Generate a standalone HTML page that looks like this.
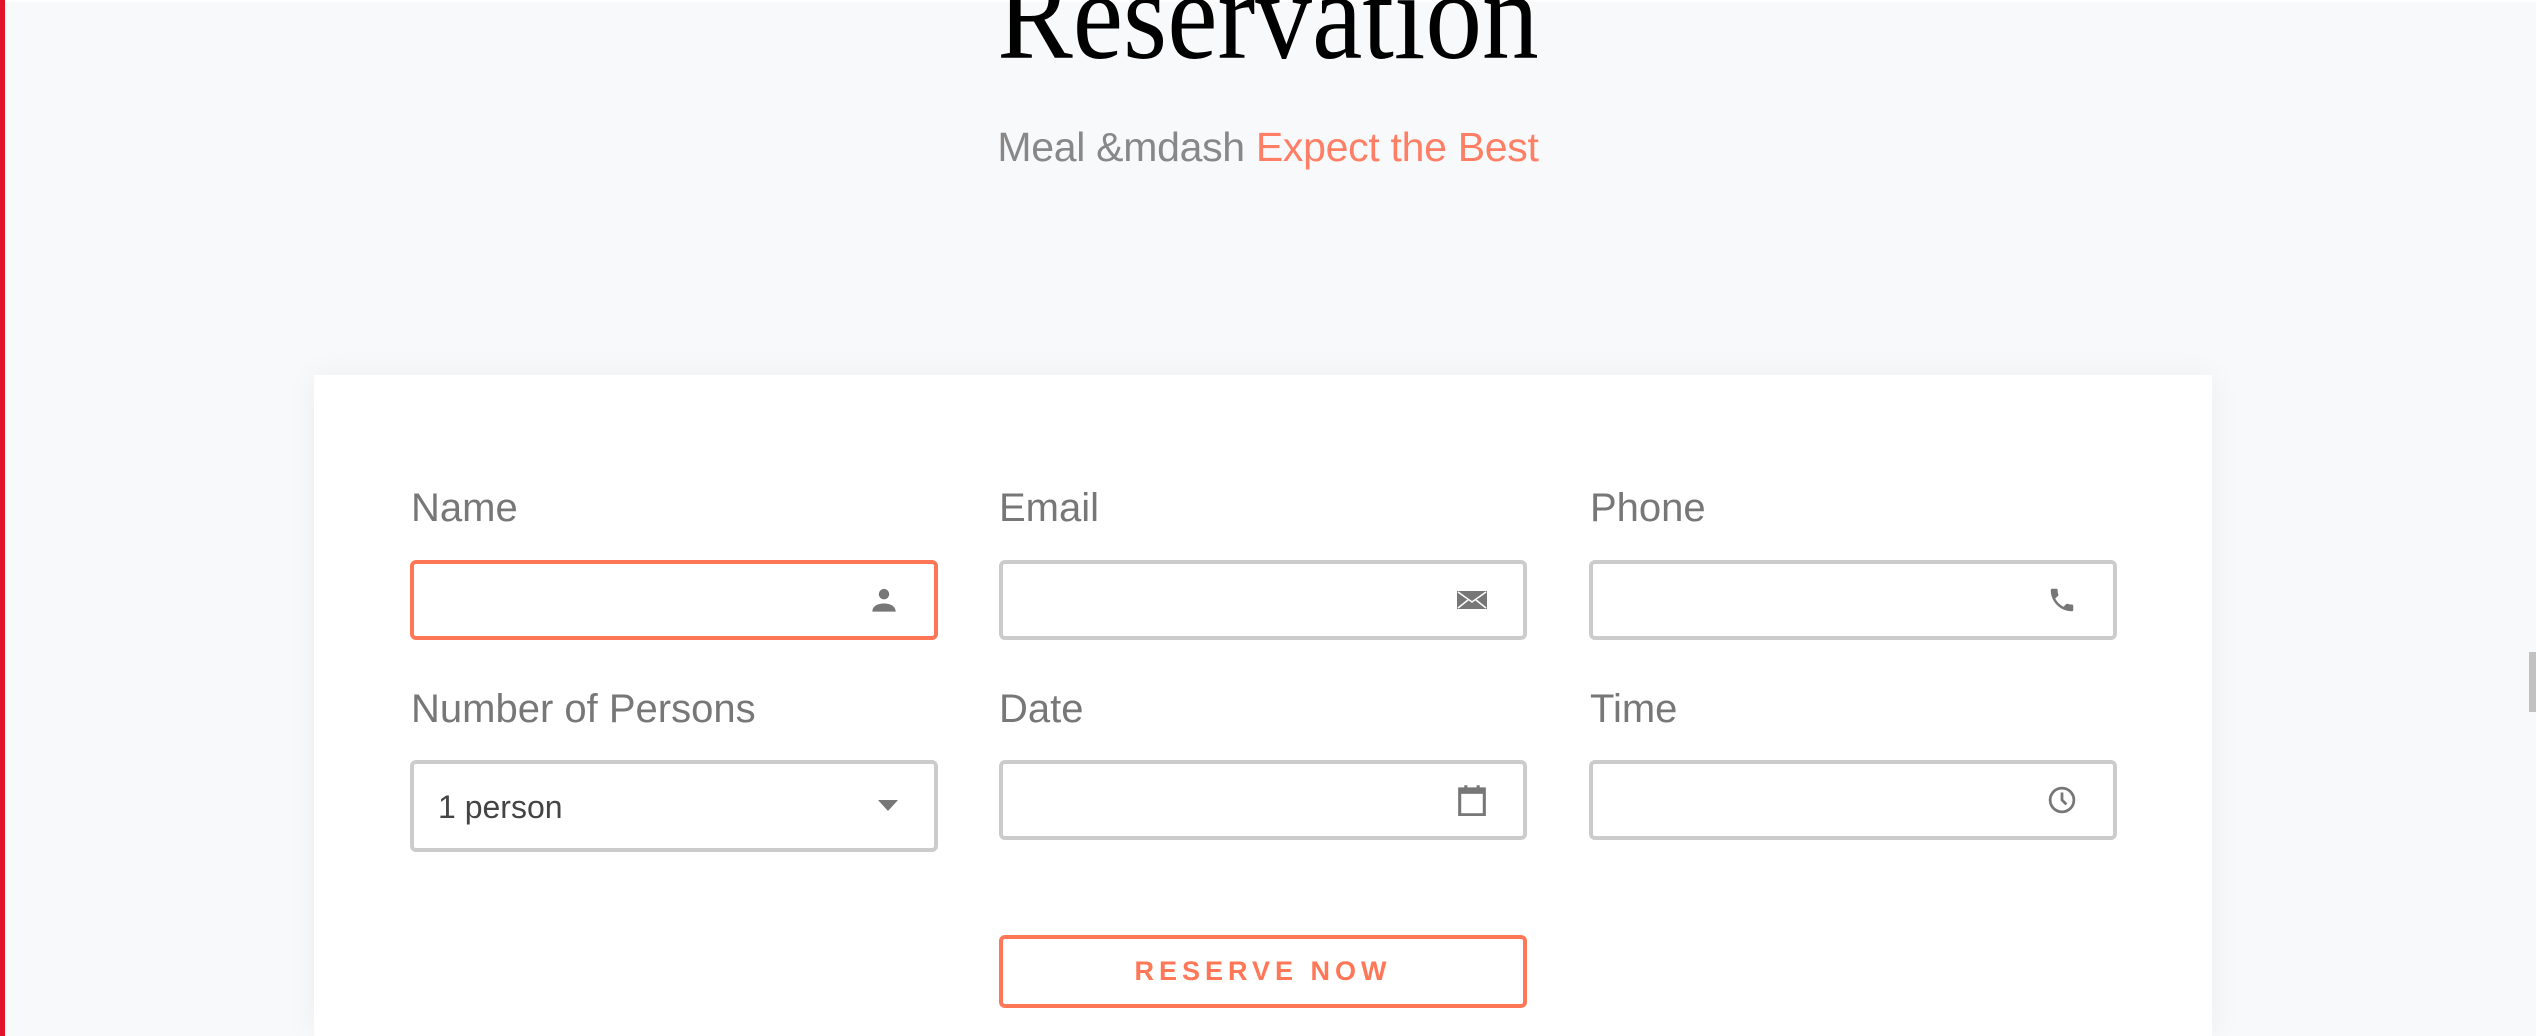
<!DOCTYPE html>
<html><head><meta charset="utf-8"><style>
*{box-sizing:border-box;margin:0;padding:0}
html,body{width:2536px;height:1036px;overflow:hidden;background:#f8f9fa;font-family:"Liberation Sans",sans-serif}
.redbar{position:absolute;left:0;top:0;width:5px;height:1036px;background:#e3122b}
.topw{position:absolute;left:0;top:0;width:2536px;height:2px;background:#fff}
.title{position:absolute;left:0;width:2536px;top:-46px;text-align:center;font-family:"Liberation Serif",serif;font-size:126px;color:#000;line-height:1}
.title span{display:inline-block;transform:scaleX(0.9)}
.sub{position:absolute;left:0;width:2536px;top:124px;text-align:center;font-size:41px;color:#888;letter-spacing:-0.3px}
.sub b{font-weight:normal;color:#ff7f66}
.card{position:absolute;left:314px;top:375px;width:1898px;height:661px;background:#fff;box-shadow:0 0 30px rgba(0,0,0,0.05)}
.lbl{position:absolute;font-size:40px;color:#777}
.inp{position:absolute;width:528px;height:80px;border:4px solid #ccc;border-radius:6px;background:#fff}
.inp.f{border-color:#ff7757}
.ic{position:absolute;right:36px;top:50%;transform:translateY(-50%)}
.sel{height:92px}
.sel .t{position:absolute;left:24px;top:25px;font-size:32px;color:#444}
.btn{position:absolute;left:999px;top:935px;width:528px;height:73px;border:4px solid #ff7757;border-radius:6px;color:#ff7757;font-weight:bold;font-size:27px;letter-spacing:5px;text-align:center;line-height:65px}
.scroll{position:absolute;right:0;top:652px;width:7px;height:60px;background:#c1c1c1}
</style></head><body>
<div class="topw"></div>
<div class="redbar"></div>
<div class="title"><span>Reservation</span></div>
<div class="sub">Meal &amp;mdash <b>Expect the Best</b></div>
<div class="card"></div>

<div class="lbl" style="left:411px;top:486px">Name</div>
<div class="lbl" style="left:999px;top:486px">Email</div>
<div class="lbl" style="left:1590px;top:486px">Phone</div>
<div class="lbl" style="left:411px;top:687px">Number of Persons</div>
<div class="lbl" style="left:999px;top:687px">Date</div>
<div class="lbl" style="left:1590px;top:687px">Time</div>

<div class="inp f" style="left:410px;top:560px"><svg class="ic" width="28" height="28" viewBox="0 0 24 24"><circle cx="12" cy="7" r="4.5" fill="#777"/><path d="M2 22c0-5 5-7 10-7s10 2 10 7z" fill="#777"/></svg></div>
<div class="inp" style="left:999px;top:560px"><svg class="ic" width="30" height="18" viewBox="0 0 30 18"><rect width="30" height="18" fill="#777"/><path d="M1 1l14 10 14-10M1 17l10-8M29 17l-10-8" stroke="#fff" stroke-width="1.5" fill="none"/></svg></div>
<div class="inp" style="left:1589px;top:560px"><svg class="ic" width="30" height="30" viewBox="0 0 24 24"><path d="M6.6 10.8c1.4 2.8 3.8 5.1 6.6 6.6l2.2-2.2c.3-.3.7-.4 1-.2 1.1.4 2.300.6 3.6.6.6 0 1 .4 1 1V20c0 .6-.4 1-1 1C10.6 21 3 13.4 3 4c0-.6.4-1 1-1h3.5c.6 0 1 .4 1 1 0 1.3.2 2.5.6 3.6.1.3 0 .7-.2 1z" fill="#777"/></svg></div>

<div class="inp sel" style="left:410px;top:760px"><div class="t">1 person</div><svg class="ic" width="20" height="12" viewBox="0 0 20 12"><path d="M0 0h20L10 11z" fill="#777"/></svg></div>
<div class="inp" style="left:999px;top:760px"><svg class="ic" width="30" height="32" viewBox="0 0 24 26"><rect x="2" y="4" width="20" height="21" fill="none" stroke="#777" stroke-width="2.5"/><rect x="2" y="4" width="20" height="4" fill="#777"/><path d="M7 1v6M17 1v6" stroke="#777" stroke-width="2.5"/></svg></div>
<div class="inp" style="left:1589px;top:760px"><svg class="ic" width="30" height="30" viewBox="0 0 24 24"><circle cx="12" cy="12" r="9.5" fill="none" stroke="#777" stroke-width="2.2"/><path d="M12 6v6l3.5 3.5" stroke="#777" stroke-width="2.2" fill="none"/></svg></div>

<div class="btn">RESERVE NOW</div>
<div class="scroll"></div>
</body></html>
